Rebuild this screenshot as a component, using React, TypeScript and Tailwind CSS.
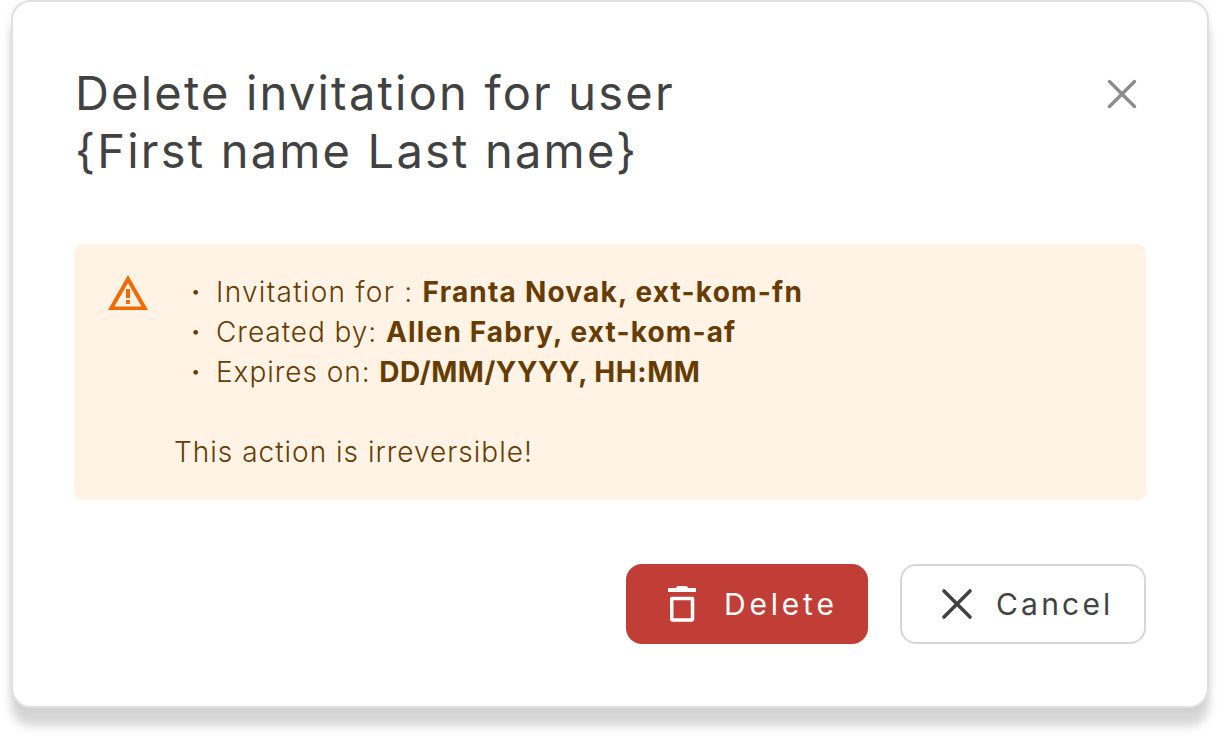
import { X } from "lucide-react";

const font = "font-['Inter','Liberation_Sans',sans-serif]";

function TrashIcon() {
  return (
    <svg width="32" height="40" viewBox="0 0 32 40" fill="none" aria-hidden>
      <path d="M2 4h28v4H2z" fill="#fff" />
      <path d="M10 4c0-1 1-2 2-2h8c1 0 2 1 2 2z" fill="#fff" />
      <path d="M5.750 14.500h20.750v20.500a1 1 0 0 1-1 1h-18.750a1 1 0 0 1-1-1z" stroke="#fff" strokeWidth="3.500" strokeLinejoin="round" />
    </svg>
  );
}

function WarningIcon() {
  return (
    <svg width="40" height="36" viewBox="0 0 40 36" aria-hidden>
      <path fillRule="evenodd" d="M20 0 40 35H0zM20 8 6.500 31.500h27z" fill="#f06a00" />
      <path d="M18 14h4v9h-4zM18 25h4v4h-4z" fill="#f06a00" />
    </svg>
  );
}

export default function App() {
  return (
    <div className={`h-[738px] w-[1220px] overflow-hidden bg-white pl-[11px] ${font}`}>
      <div className="h-[708px] w-[1198px] rounded-[20px] border-2 border-[#e0e0e0] bg-white px-[61px] pt-[62px] shadow-[0_18px_10px_rgba(0,0,0,0.16),0_0_8px_rgba(0,0,0,0.06)]">
        <div className="flex items-start justify-between">
          <h2 className="pl-[1px] text-[47px] leading-[58px] font-normal tracking-[2.2px] text-[#424242]">
            Delete invitation for user
            <br />
            {"{First name Last name}"}
          </h2>
          <X className="mt-[5px] mr-[-1px]" size={50} strokeWidth={3.400} color="#8c8c8c" absoluteStrokeWidth />
        </div>

        <div className="mt-[64px] flex h-[256px] w-[1072px] rounded-[8px] bg-[#fff3e6] pl-[34px] pt-[28px] text-[28px] leading-[40px] tracking-[1px] text-[#663c00]">
          <div className="w-[66px] pt-[3px]">
            <WarningIcon />
          </div>
          <div className="font-light">
            <ul>
              <li className="flex"><span className="w-[42px] pl-[17px] font-bold">·</span><span className="tracking-[1.300px]">Invitation for : <b className="font-bold tracking-[1.200px]">Franta Novak, ext-kom-fn</b></span></li>
              <li className="flex"><span className="w-[42px] pl-[17px] font-bold">·</span><span className="tracking-[0.950px]">Created by: <b className="font-bold tracking-[1.150px]">Allen Fabry, ext-kom-af</b></span></li>
              <li className="flex"><span className="w-[42px] pl-[17px] font-bold">·</span><span className="tracking-[0.950px]">Expires on: <b className="font-bold tracking-[0.550px]">DD/MM/YYYY, HH:MM</b></span></li>
            </ul>
            <p className="mt-[40px]">This action is irreversible!</p>
          </div>
        </div>

        <div className="mt-[64px] flex w-[1072px] justify-end gap-[32px]">
          <button className="flex h-[80px] w-[242px] items-center rounded-[16px] bg-[#c13e37] pl-[40px] text-[30px] tracking-[3.800px] text-white">
            <TrashIcon />
            <span className="ml-[26px]">Delete</span>
          </button>
          <button className="flex h-[80px] w-[246px] items-center rounded-[16px] border-2 border-[#d6d6d6] bg-white pl-[29px] text-[30px] tracking-[3.200px] text-[#424242]">
            <X size={52} strokeWidth={3.600} absoluteStrokeWidth />
            <span className="ml-[13px]">Cancel</span>
          </button>
        </div>
      </div>
    </div>
  );
}
